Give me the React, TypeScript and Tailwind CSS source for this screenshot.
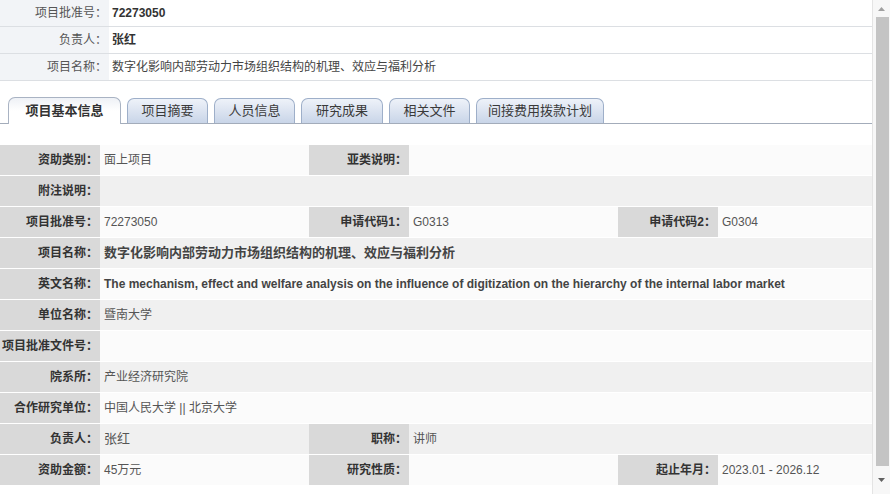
import React from 'react';

const font = { fontFamily: '"Liberation Sans", "Noto Sans CJK SC", sans-serif' };

const topRows = [
  { label: '项目批准号：', value: '72273050', bold: true },
  { label: '负责人：', value: '张红', bold: true },
  { label: '项目名称：', value: '数字化影响内部劳动力市场组织结构的机理、效应与福利分析', bold: false },
];

const tabs = ['项目基本信息', '项目摘要', '人员信息', '研究成果', '相关文件', '间接费用拨款计划'];
const tabWidths = ['w-[113px]', 'w-[81px]', 'w-[81px]', 'w-[82px]', 'w-[81px]', 'w-[128px]'];

type Cell = { label: string; value?: string; bold?: boolean; big?: boolean };
type Row = Cell[];

const rows: Row[] = [
  [{ label: '资助类别：', value: '面上项目' }, { label: '亚类说明：', value: '' }],
  [{ label: '附注说明：', value: '' }],
  [
    { label: '项目批准号：', value: '72273050' },
    { label: '申请代码1：', value: 'G0313' },
    { label: '申请代码2：', value: 'G0304' },
  ],
  [{ label: '项目名称：', value: '数字化影响内部劳动力市场组织结构的机理、效应与福利分析', bold: true, big: true }],
  [
    {
      label: '英文名称：',
      value:
        'The mechanism, effect and welfare analysis on the influence of digitization on the hierarchy of the internal labor market',
      bold: true,
    },
  ],
  [{ label: '单位名称：', value: '暨南大学' }],
  [{ label: '项目批准文件号：', value: '' }],
  [{ label: '院系所：', value: '产业经济研究院' }],
  [{ label: '合作研究单位：', value: '中国人民大学 || 北京大学' }],
  [{ label: '负责人：', value: '张红', big: true }, { label: '职称：', value: '讲师' }],
  [
    { label: '资助金额：', value: '45万元' },
    { label: '研究性质：', value: '' },
    { label: '起止年月：', value: '2023.01 - 2026.12' },
  ],
];

function Label({ text }: { text: string }) {
  return (
    <div className="w-[100px] shrink-0 h-[30px] bg-[#d9d9d9] flex items-center justify-end pr-[2px] text-[12px] font-bold text-[#333] whitespace-nowrap">
      {text}
    </div>
  );
}

function InfoRow({ row, shaded }: { row: Row; shaded: boolean }) {
  return (
    <div className={`flex h-[31px] border-b border-white ${shaded ? 'bg-[#f0f0f0]' : 'bg-[#fbfbfb]'}`}>
      {row.map((c, i) => {
        const last = i === row.length - 1;
        return (
          <React.Fragment key={i}>
            <Label text={c.label} />
            <div
              className={`${last ? 'flex-1' : 'w-[209px] shrink-0'} flex items-center pl-[4px] whitespace-nowrap overflow-hidden ${
                c.bold ? 'font-bold text-[#444]' : 'text-[#555]'
              } ${c.big ? 'text-[13px]' : 'text-[12px]'}`}
            >
              {c.value}
            </div>
          </React.Fragment>
        );
      })}
    </div>
  );
}

function Scrollbar() {
  return (
    <div className="w-[18px] h-full bg-[#f7f7f7] border-l border-[#e4e4e4] flex flex-col items-center">
      <div className="h-[17px] flex items-center justify-center">
        <svg width="7" height="4" viewBox="0 0 7 4">
          <path d="M0 4 L3.5 0 L7 4 Z" fill="#a0a0a0" />
        </svg>
      </div>
      <div className="w-[13px] flex-1 bg-[#c4c4c4] ml-[2px]" />
      <div className="h-[28px] flex items-center justify-center">
        <svg width="7" height="4" viewBox="0 0 7 4">
          <path d="M0 0 L3.5 4 L7 0 Z" fill="#606060" />
        </svg>
      </div>
    </div>
  );
}

export default function App() {
  return (
    <div className="w-[890px] h-[494px] bg-white flex overflow-hidden" style={font}>
      <div className="w-[872px] shrink-0 flex flex-col">
        {/* header summary */}
        <div className="flex flex-col">
          {topRows.map((r) => (
            <div key={r.label} className="flex h-[27px] border-b border-[#dcdfe3]">
              <div className="w-[109px] shrink-0 bg-[#f2f4f7] flex items-center justify-end pr-[2px] text-[12px] text-[#555]">
                {r.label}
              </div>
              <div
                className={`flex-1 flex items-center pl-[3px] text-[12px] ${
                  r.bold ? 'font-bold text-[#333]' : 'text-[#444]'
                }`}
              >
                {r.value}
              </div>
            </div>
          ))}
        </div>

        {/* tabs */}
        <div className="mt-[16px] flex items-end gap-[6px] pl-[8px] border-b border-[#a3acba] h-[27px]">
          {tabs.map((t, i) =>
            i === 0 ? (
              <div
                key={t}
                className={`${tabWidths[i]} h-[27px] -mb-px rounded-t-[7px] border border-b-0 border-[#a9b3c3] bg-gradient-to-b from-[#eef1f6] via-white to-white flex items-center justify-center text-[13px] font-bold text-[#333]`}
              >
                {t}
              </div>
            ) : (
              <div
                key={t}
                className={`${tabWidths[i]} h-[25px] rounded-t-[7px] border border-b-0 border-[#9eafc9] bg-gradient-to-b from-[#eef2f9] to-[#c9d5e8] flex items-center justify-center text-[13px] text-[#3a3a3a]`}
              >
                {t}
              </div>
            )
          )}
        </div>

        {/* info table */}
        <div className="mt-[21px] flex flex-col">
          {rows.map((r, i) => (
            <InfoRow key={i} row={r} shaded={i % 2 === 1} />
          ))}
        </div>
      </div>
      <Scrollbar />
    </div>
  );
}
